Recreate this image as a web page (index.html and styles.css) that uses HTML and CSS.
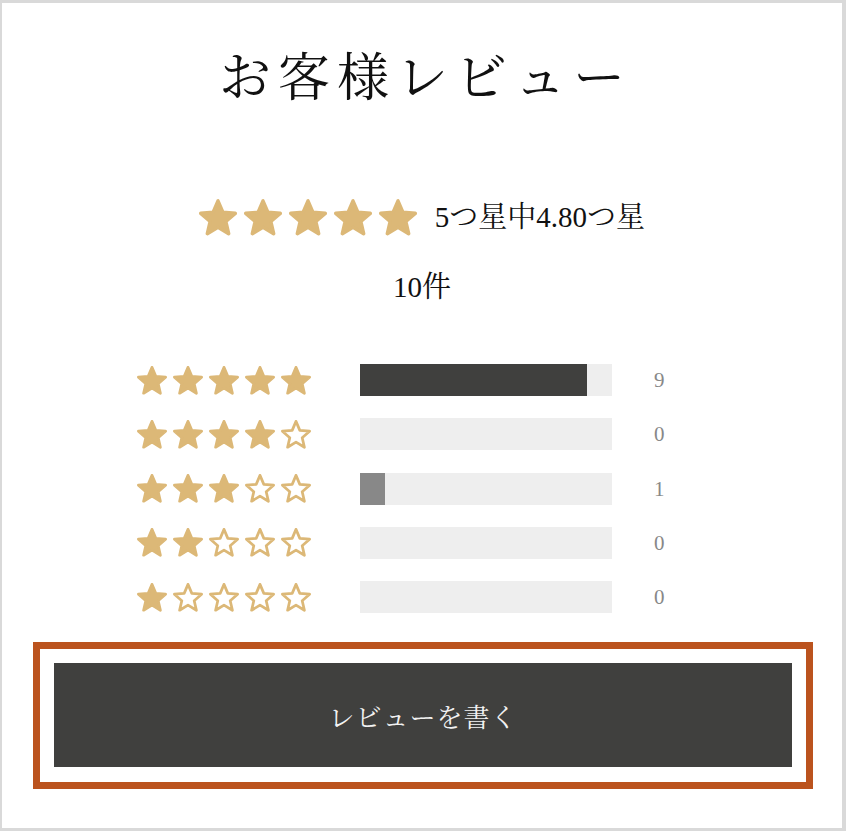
FILE: index.html
```html
<!DOCTYPE html>
<html lang="ja">
<head>
<meta charset="utf-8">
<title>お客様レビュー</title>
<link rel="stylesheet" href="styles.css">
</head>
<body>
<svg class="defs" width="0" height="0" aria-hidden="true">
  <defs>
    <path id="star" d="M12 17.27L18.18 21l-1.64-7.03L22 9.24l-7.19-.61L12 2 9.19 8.63 2 9.24l5.46 4.73L5.82 21z"/>
  </defs>
</svg>
<div class="frame">
  <h1 class="title">お客様レビュー</h1>

  <div class="summary">
    <div class="stars stars-lg">
      <svg class="star full" viewBox="1 1 22 21.3"><use href="#star"/></svg>
      <svg class="star full" viewBox="1 1 22 21.3"><use href="#star"/></svg>
      <svg class="star full" viewBox="1 1 22 21.3"><use href="#star"/></svg>
      <svg class="star full" viewBox="1 1 22 21.3"><use href="#star"/></svg>
      <svg class="star full" viewBox="1 1 22 21.3"><use href="#star"/></svg>
    </div>
    <span class="summary-text">5つ星中4.80つ星</span>
  </div>
  <p class="count-total">10件</p>

  <div class="dist">
    <div class="stars stars-sm">
      <svg class="star full" viewBox="1 1 22 21.3"><use href="#star"/></svg>
      <svg class="star full" viewBox="1 1 22 21.3"><use href="#star"/></svg>
      <svg class="star full" viewBox="1 1 22 21.3"><use href="#star"/></svg>
      <svg class="star full" viewBox="1 1 22 21.3"><use href="#star"/></svg>
      <svg class="star full" viewBox="1 1 22 21.3"><use href="#star"/></svg>
    </div>
    <div class="bar"><div class="fill fill-main" style="width:90%"></div></div>
    <span class="num">9</span>

    <div class="stars stars-sm">
      <svg class="star full" viewBox="1 1 22 21.3"><use href="#star"/></svg>
      <svg class="star full" viewBox="1 1 22 21.3"><use href="#star"/></svg>
      <svg class="star full" viewBox="1 1 22 21.3"><use href="#star"/></svg>
      <svg class="star full" viewBox="1 1 22 21.3"><use href="#star"/></svg>
      <svg class="star empty" viewBox="1 1 22 21.3"><use href="#star"/></svg>
    </div>
    <div class="bar"></div>
    <span class="num">0</span>

    <div class="stars stars-sm">
      <svg class="star full" viewBox="1 1 22 21.3"><use href="#star"/></svg>
      <svg class="star full" viewBox="1 1 22 21.3"><use href="#star"/></svg>
      <svg class="star full" viewBox="1 1 22 21.3"><use href="#star"/></svg>
      <svg class="star empty" viewBox="1 1 22 21.3"><use href="#star"/></svg>
      <svg class="star empty" viewBox="1 1 22 21.3"><use href="#star"/></svg>
    </div>
    <div class="bar"><div class="fill fill-light" style="width:10%"></div></div>
    <span class="num">1</span>

    <div class="stars stars-sm">
      <svg class="star full" viewBox="1 1 22 21.3"><use href="#star"/></svg>
      <svg class="star full" viewBox="1 1 22 21.3"><use href="#star"/></svg>
      <svg class="star empty" viewBox="1 1 22 21.3"><use href="#star"/></svg>
      <svg class="star empty" viewBox="1 1 22 21.3"><use href="#star"/></svg>
      <svg class="star empty" viewBox="1 1 22 21.3"><use href="#star"/></svg>
    </div>
    <div class="bar"></div>
    <span class="num">0</span>

    <div class="stars stars-sm">
      <svg class="star full" viewBox="1 1 22 21.3"><use href="#star"/></svg>
      <svg class="star empty" viewBox="1 1 22 21.3"><use href="#star"/></svg>
      <svg class="star empty" viewBox="1 1 22 21.3"><use href="#star"/></svg>
      <svg class="star empty" viewBox="1 1 22 21.3"><use href="#star"/></svg>
      <svg class="star empty" viewBox="1 1 22 21.3"><use href="#star"/></svg>
    </div>
    <div class="bar"></div>
    <span class="num">0</span>
  </div>

  <div class="cta-box">
    <button class="cta" type="button">レビューを書く</button>
  </div>
</div>
</body>
</html>
```

FILE: styles.css
```css
html, body {
  margin: 0;
  padding: 0;
}

body {
  background: #d9d9d9;
  font-family: "Liberation Serif", "Noto Serif CJK JP", "IPAexMincho", "IPAMincho", "Noto Sans CJK JP", serif;
  color: #111;
}

.defs {
  position: absolute;
  width: 0;
  height: 0;
  overflow: hidden;
}

.frame {
  background: #fff;
  margin: 3px 4px 3px 2px;
  height: 825px;
  box-sizing: border-box;
  padding-top: 46px;
  display: flex;
  flex-direction: column;
  align-items: center;
}

.title {
  margin: 0;
  font-weight: normal;
  font-size: 52px;
  line-height: 60px;
  letter-spacing: 7px;
  padding-left: 7px;
  color: #111;
}

.summary {
  margin-top: 88px;
  display: flex;
  align-items: center;
  height: 40px;
  gap: 18px;
}

.stars {
  display: flex;
  align-items: center;
}

.star {
  display: block;
  fill: #dcb877;
  stroke: #dcb877;
  stroke-width: 2;
  stroke-linejoin: round;
}

.star.empty {
  fill: none;
}

.stars-lg {
  gap: 7px;
}

.stars-lg .star {
  width: 38px;
  height: 37px;
}

.summary-text {
  font-size: 29px;
  line-height: 32px;
}

.count-total {
  margin: 34px 0 0;
  font-size: 29px;
  line-height: 32px;
}

.dist {
  margin-top: 61px;
  width: 570px;
  display: grid;
  grid-template-columns: 174px 301px 1fr;
  grid-auto-rows: 32px;
  row-gap: 22.3px;
  align-items: center;
}

.stars-sm {
  gap: 6px;
}

.stars-sm .star {
  width: 30px;
  height: 29px;
}

.bar {
  margin-left: 49px;
  width: 252px;
  height: 32px;
  background: #eeeeee;
  display: flex;
}

.fill {
  height: 100%;
}

.fill-main {
  background: #40403e;
}

.fill-light {
  background: #888888;
}

.num {
  padding-left: 42px;
  font-size: 21px;
  color: #888;
  line-height: 32px;
}

.cta-box {
  margin-top: 29px;
  align-self: stretch;
  margin-left: 31px;
  margin-right: 29px;
  border: 7px solid #bb531e;
  padding: 14px 14px 15px;
}

.cta {
  display: block;
  width: 100%;
  height: 104px;
  background: #40403e;
  border: none;
  color: #f2f2f2;
  font-family: "Liberation Serif", "Noto Serif CJK JP", "IPAexMincho", "IPAMincho", "Noto Sans CJK JP", serif;
  font-size: 26px;
  letter-spacing: 1px;
  padding: 0;
}
```
